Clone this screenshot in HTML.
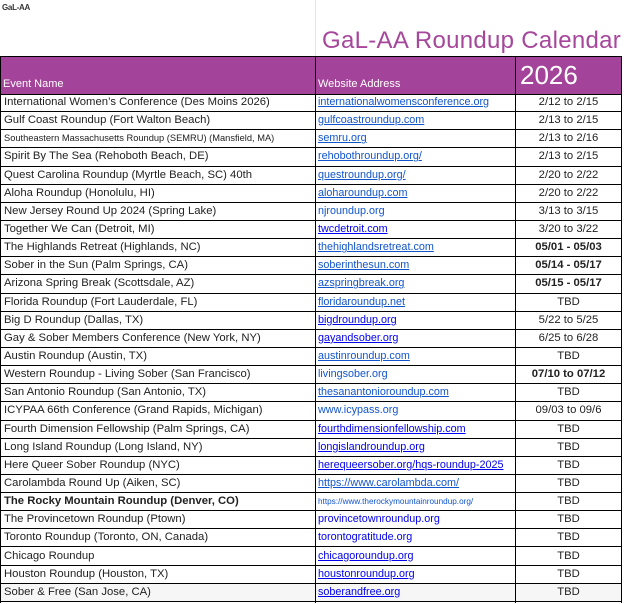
<!DOCTYPE html>
<html><head><meta charset="utf-8"><style>
*{margin:0;padding:0;box-sizing:border-box}
body{width:624px;height:604px;background:#fff;font-family:"Liberation Sans",sans-serif;position:relative;overflow:hidden;color:#222}
.logo{position:absolute;left:2px;top:3px;font-size:8px;font-weight:bold;color:#333;letter-spacing:-0.3px}
.title{position:absolute;left:322px;top:27px;font-size:24px;color:#a6479b;white-space:nowrap;letter-spacing:0.3px}
.vl{position:absolute;top:0;width:1px;height:56px;background:#e4e4e4}
.head{position:absolute;top:56px;left:0;width:622px;height:38px;background:#a4439a;border-top:1px solid #000}
.head div{position:absolute;color:#fff;font-size:11px;bottom:4px}
.yr{font-size:26px!important;bottom:3px!important;left:520px}
.row{position:absolute;left:0;width:622px;height:18.14px;border-bottom:1px solid #000;font-size:11.3px;line-height:17px}
.row span{position:absolute;top:0;white-space:nowrap}
.c1{left:4px}
.c2{left:318px;color:#1155cc;font-size:10.8px}
.c2.u{text-decoration:underline}
.c2.b{color:#0000ee}
.c3{left:515px;width:107px;text-align:center}
.grid{position:absolute;top:56px;width:1px;height:547px;background:#000}
</style></head><body>
<div class="logo">GaL-AA</div>
<div class="vl" style="left:315px"></div>
<div class="title">GaL-AA Roundup Calendar</div>
<div class="head"><div style="left:3px">Event Name</div><div style="left:318px">Website Address</div><div class="yr">2026</div></div>
<div style="position:absolute;left:0;top:94px;width:622px;height:1px;background:#000"></div>
<div id="rows"></div>
<div class="grid" style="left:0"></div>
<div class="grid" style="left:315px"></div>
<div class="grid" style="left:515px;top:56px"></div>
<div class="grid" style="left:621px"></div>
<script>
var d=[
["International Women’s Conference (Des Moins 2026)","internationalwomensconference.org","2/12 to 2/15","u"],
["Gulf Coast Roundup (Fort Walton Beach)","gulfcoastroundup.com","2/13 to 2/15","u"],
["Southeastern Massachusetts Roundup (SEMRU) (Mansfield, MA)","semru.org","2/13 to 2/16","u s"],
["Spirit By The Sea (Rehoboth Beach, DE)","rehobothroundup.org/","2/13 to 2/15","u"],
["Quest Carolina Roundup (Myrtle Beach, SC) 40th","questroundup.org/","2/20 to 2/22","u"],
["Aloha Roundup (Honolulu, HI)","aloharoundup.com","2/20 to 2/22","u"],
["New Jersey Round Up 2024 (Spring Lake)","njroundup.org","3/13 to 3/15",""],
["Together We Can (Detroit, MI)","twcdetroit.com","3/20 to 3/22","u b"],
["The Highlands Retreat (Highlands, NC)","thehighlandsretreat.com","05/01 - 05/03","u B"],
["Sober in the Sun (Palm Springs, CA)","soberinthesun.com","05/14 - 05/17","u B"],
["Arizona Spring Break (Scottsdale, AZ)","azspringbreak.org","05/15 - 05/17","u B"],
["Florida Roundup (Fort Lauderdale, FL)","floridaroundup.net","TBD","u"],
["Big D Roundup (Dallas, TX)","bigdroundup.org","5/22 to 5/25","u b"],
["Gay & Sober Members Conference (New York, NY)","gayandsober.org","6/25 to 6/28","u b"],
["Austin Roundup (Austin, TX)","austinroundup.com","TBD","u"],
["Western Roundup - Living Sober (San Francisco)","livingsober.org","07/10 to 07/12","B"],
["San Antonio Roundup (San Antonio, TX)","thesanantonioroundup.com","TBD","u"],
["ICYPAA 66th Conference (Grand Rapids, Michigan)","www.icypass.org","09/03 to 09/6",""],
["Fourth Dimension Fellowship (Palm Springs, CA)","fourthdimensionfellowship.com","TBD","u b"],
["Long Island Roundup (Long Island, NY)","longislandroundup.org","TBD","u b"],
["Here Queer Sober Roundup (NYC)","herequeersober.org/hqs-roundup-2025","TBD","u b"],
["Carolambda Round Up (Aiken, SC)","https://www.carolambda.com/","TBD","u"],
["The Rocky Mountain Roundup (Denver, CO)","https://www.therockymountainroundup.org/","TBD","s X"],
["The Provincetown Roundup (Ptown)","provincetownroundup.org","TBD","b"],
["Toronto Roundup (Toronto, ON, Canada)","torontogratitude.org","TBD","b"],
["Chicago Roundup","chicagoroundup.org","TBD","u b"],
["Houston Roundup (Houston, TX)","houstonroundup.org","TBD","u b"],
["Sober & Free (San Jose, CA)","soberandfree.org","TBD","u b"]];
var h="";
d.forEach(function(r,i){var f=r[3];var t=94+i*18.14;
var c1s=f.indexOf("X")>=0?"font-weight:bold;":"";
if(f.indexOf("s")>=0&&f.indexOf("X")<0)c1s+="font-size:9.3px;";
var c2s=(f.indexOf("s")>=0&&f.indexOf("X")>=0)?"font-size:8.2px;":"";
h+='<div class="row" style="top:'+t+'px'+(i==27?';background:#f6f6f6':'')+'"><span class="c1" style="'+c1s+'">'+r[0].replace(/&/g,'&amp;')+'</span><span class="c2'+(f.indexOf("u")>=0?' u':'')+(f.indexOf("b")>=0?' b':'')+'" style="'+c2s+'">'+r[1]+'</span><span class="c3" style="'+(f.indexOf("B")>=0?'font-weight:bold':'')+'">'+r[2]+'</span></div>';});
document.getElementById("rows").innerHTML=h;
</script>
</body></html>
